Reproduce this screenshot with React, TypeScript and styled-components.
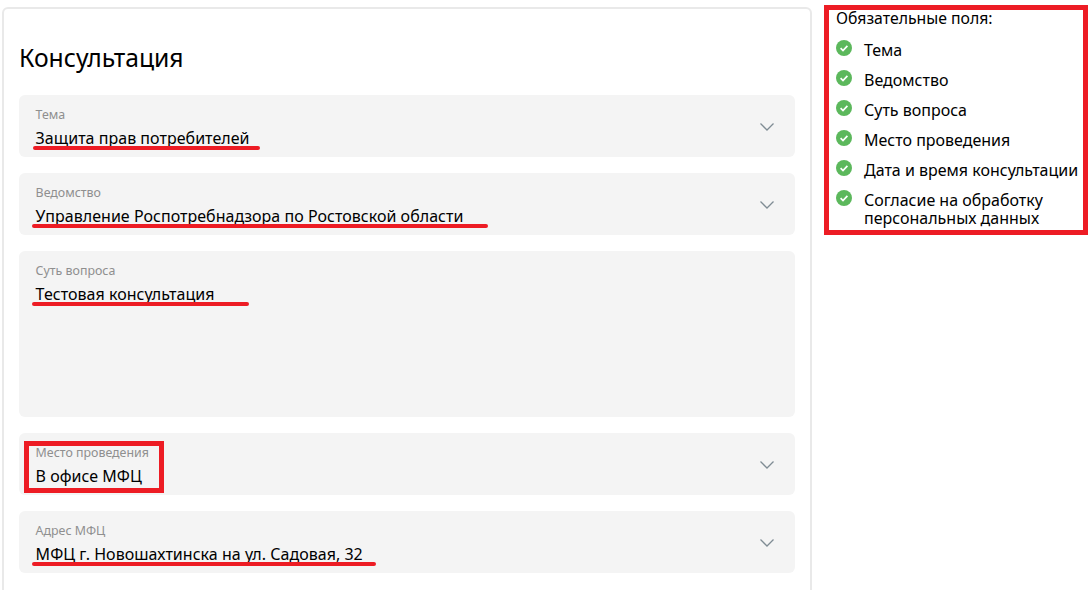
import React from 'react'
import styled, { createGlobalStyle } from 'styled-components'

const FONT = '"Noto Sans", sans-serif'

const required = [
	'Тема',
	'Ведомство',
	'Суть вопроса',
	'Место проведения',
	'Дата и время консультации',
	'Согласие на обработку персональных данных',
]

function Chevron() {
	return (
		<ChevronIcon width="14" height="8" viewBox="0 0 14 8">
			<path d="M0.5 0.5 L7 7 L13.5 0.5" fill="none" stroke="#7f8c94" strokeWidth="1.3" />
		</ChevronIcon>
	)
}

function Check() {
	return (
		<CheckIcon width="16" height="16" viewBox="0 0 16 16">
			<circle cx="8" cy="8" r="8" fill="#5cb85c" />
			<path d="M4.6 8.2 L7 10.5 L11.4 5.9" fill="none" stroke="#fff" strokeWidth="1.7" />
		</CheckIcon>
	)
}

function App() {
	return (
		<Page>
			<GlobalStyle />
			<Card>
				<Title>Консультация</Title>
				<Fields>
					<Field>
						<Label>Тема</Label>
						<Value>Защита прав потребителей</Value>
						<Chevron />
						<Underline $left={14} $width={227} />
					</Field>
					<Field>
						<Label>Ведомство</Label>
						<Value>Управление Роспотребнадзора по Ростовской области</Value>
						<Chevron />
						<Underline $left={13} $width={456} />
					</Field>
					<Field $tall>
						<Label>Суть вопроса</Label>
						<Value>Тестовая консультация</Value>
						<Underline $left={13} $width={217} />
					</Field>
					<Field>
						<Label>Место проведения</Label>
						<Value>В офисе МФЦ</Value>
						<Chevron />
						<MarkBox />
					</Field>
					<Field>
						<Label>Адрес МФЦ</Label>
						<Value>МФЦ г. Новошахтинска на ул. Садовая, 32</Value>
						<Chevron />
						<Underline $left={13} $width={344} />
					</Field>
				</Fields>
			</Card>
			<Aside>
				<AsideTitle>Обязательные поля:</AsideTitle>
				<List>
					{required.map(item => (
						<Item key={item}>
							<Check />
							<span>{item}</span>
						</Item>
					))}
				</List>
			</Aside>
		</Page>
	)
}

export default App

//#region styles
const GlobalStyle = createGlobalStyle`
	html, body {
		margin: 0;
		padding: 0;
		background: #fff;
	}
	body {
		font-family: ${FONT};
		color: #000;
	}
`

const Page = styled.div`
	display: flex;
	align-items: flex-start;
	width: 1092px;
	height: 590px;
	overflow: hidden;
	box-sizing: border-box;
	padding: 5px 4px 0 2px;
`

const Card = styled.div`
	flex: none;
	box-sizing: border-box;
	width: 810px;
	height: 620px;
	margin-top: 2px;
	padding: 29px 15px 0;
	border: 2px solid #e9e9e9;
	border-radius: 6px;
	background: #fff;
`

const Title = styled.h1`
	margin: 0 0 18px;
	font-size: 24.7px;
	line-height: 39px;
	font-weight: 400;
`

const Fields = styled.div`
	display: flex;
	flex-direction: column;
	gap: 16px;
`

const Field = styled.div<{ $tall?: boolean }>`
	position: relative;
	box-sizing: border-box;
	height: ${p => (p.$tall ? 166 : 62)}px;
	padding: 11px 17px 0 16.6px;
	background: #f4f4f4;
	border-radius: 6px;
`

const Label = styled.div`
	font-size: 12.4px;
	line-height: 17px;
	color: #8f8f8f;
`

const Value = styled.div`
	margin-top: 4px;
	font-size: 16px;
	line-height: 22px;
	letter-spacing: 0.03px;
`

const ChevronIcon = styled.svg`
	position: absolute;
	top: 28px;
	right: 21px;
`

// красные пометки поверх формы
const Underline = styled.div<{ $left: number; $width: number }>`
	position: absolute;
	left: ${p => p.$left}px;
	top: 51px;
	width: ${p => p.$width}px;
	height: 4px;
	border-radius: 2px;
	background: #ed1c24;
`

const MarkBox = styled.div`
	position: absolute;
	left: 5px;
	top: 8px;
	width: 140px;
	height: 52px;
	box-sizing: border-box;
	border: 5px solid #ed1c24;
`

const Aside = styled.aside`
	flex: none;
	box-sizing: border-box;
	width: 264px;
	height: 230px;
	margin-left: 12px;
	padding: 0 0 0 7px;
	border: 5px solid #ed1c24;
`

const AsideTitle = styled.div`
	font-size: 15.8px;
	line-height: 16px;
`

const List = styled.ul`
	display: flex;
	flex-direction: column;
	gap: 12px;
	margin: 15px 0 0;
	padding: 0;
	list-style: none;
`

const Item = styled.li`
	display: flex;
	gap: 12px;
	font-size: 16px;
	line-height: 18px;
`

const CheckIcon = styled.svg`
	flex: none;
	margin-top: -1px;
`
//#endregion
